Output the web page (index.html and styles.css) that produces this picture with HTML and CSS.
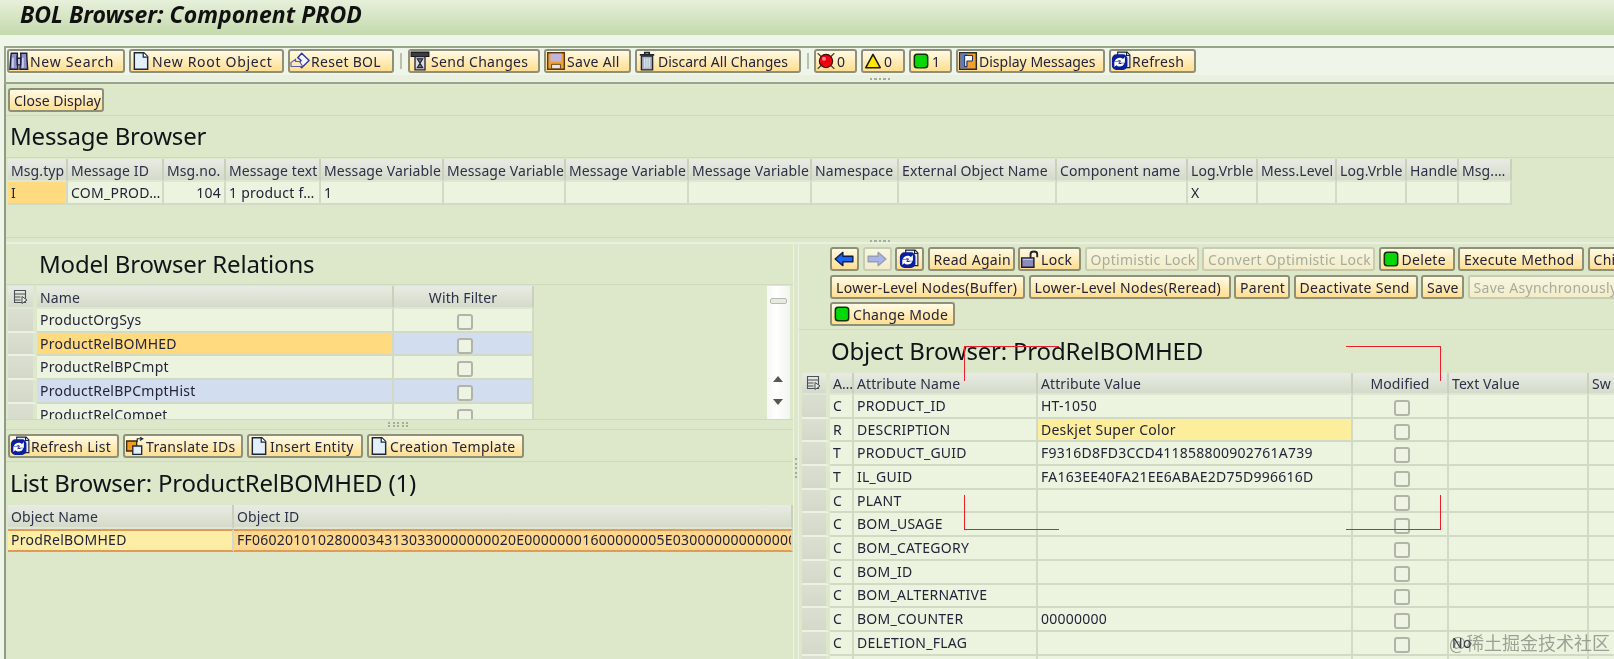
FILE: index.html
```html
<!DOCTYPE html>
<html lang="en">
<head>
<meta charset="utf-8">
<title>BOL Browser: Component PROD</title>
<link rel="stylesheet" href="styles.css">
</head>
<body>
<svg class="sprite" aria-hidden="true">
  <symbol id="i-bino" viewBox="0 0 18 18"><path d="M2 2h5.500v3h-.3l.8 11.500H.8l.9-11.500z" fill="#8f90c6" stroke="#1c2040" stroke-width="1.300"/><path d="M10.500 2H16v3l.8 11.500H9.800l.9-11.500z" fill="#8f90c6" stroke="#1c2040" stroke-width="1.300"/><path d="M7.500 6.500h3v6h-3z" fill="#c9c9e6" stroke="#1c2040" stroke-width="1.300"/><path d="M3.500 6v9M12.500 6v9" stroke="#dcdcf4" stroke-width="1.300"/></symbol>
  <symbol id="i-doc" viewBox="0 0 18 18"><path d="M3 1.500h8.500L15 5v11.500H3z" fill="#e3effa" stroke="#1c2838" stroke-width="1.300"/><path d="M11 1.500V5.500h4" fill="#fff" stroke="#1c2838" stroke-width="1.100"/></symbol>
  <symbol id="i-reset" viewBox="0 0 18 18"><path d="M10.500 2 17.200 8.500 10.500 15 7 11.500 10 8.500 7 6z" fill="#f7f7ff" stroke="#2b3aa8" stroke-width="1.300" stroke-linejoin="round"/><path d="M.8 10.500 5 7.500v2h3.500l3 4.500H1z" fill="#fbe7c2" stroke="#5a5aa0" stroke-width="1"/></symbol>
  <symbol id="i-send" viewBox="0 0 18 18"><path d="M1 1h16v4H1z" fill="#3c3c44" stroke="#15151c"/><path d="M4.500 5h9v12h-9z" fill="#d9dce6" stroke="#23232e" stroke-width="1.200"/><path d="M6.500 7h5L9 11l2.500 4h-5L9 11z" fill="#6b6f7e" stroke="#23232e"/></symbol>
  <symbol id="i-save" viewBox="0 0 18 18"><path d="M1.500 1.500h15v15h-15z" fill="#f0a030" stroke="#5a3a10" stroke-width="1.300"/><path d="M4 2.500h10v7H4z" fill="#c3b4dc"/><path d="M5 12h8v4H5z" fill="#e6e6e6" stroke="#5a3a10" stroke-width=".8"/></symbol>
  <symbol id="i-trash" viewBox="0 0 18 18"><path d="M2.500 3.500h13M7 3.500V1.500h4v2" fill="none" stroke="#23262e" stroke-width="1.500"/><path d="M4 4.500h10v12.500H4z" fill="#a9b4c6" stroke="#23262e" stroke-width="1.300"/><path d="M7 6.500v8.500M9 6.500v8.500M11 6.500v8.500" stroke="#e8edf4" stroke-width="1"/></symbol>
  <symbol id="i-red" viewBox="0 0 18 18"><path d="M1.500 2 16.500 16M16.500 2 1.500 16" stroke="#3a3f30" stroke-width="1"/><circle cx="9" cy="9" r="6" fill="#ee0010" stroke="#3a1010" stroke-width="1"/><circle cx="7.200" cy="7" r="1.800" fill="#ff8f8f"/></symbol>
  <symbol id="i-yellow" viewBox="0 0 18 18"><path d="M9 3 15.500 15h-13z" fill="#ffe800" stroke="#1c1c14" stroke-width="1.400" stroke-linejoin="round"/></symbol>
  <symbol id="i-green" viewBox="0 0 18 18"><rect x="3" y="3" width="12" height="12" rx="2.500" fill="#06d808" stroke="#10300f" stroke-width="1.400"/></symbol>
  <symbol id="i-msg" viewBox="0 0 18 18"><path d="M1.500 1.500h15v15h-15z" fill="#f0a030" stroke="#2a2a2a" stroke-width="1.300"/><path d="M2.200 2.200h6.300v13.600H2.200z" fill="#5d7cbc"/><path d="M6 4h7v5H8v5H6z" fill="#fff" stroke="#1a2a50" stroke-width=".9"/></symbol>
  <symbol id="i-refresh" viewBox="0 0 18 18"><path d="M6 1h8.500L17 3.500V15H6z" fill="#e8eef8" stroke="#15203a" stroke-width="1"/><path d="M14 1v3h3" fill="none" stroke="#15203a"/><rect x=".8" y="3" width="14" height="14" rx="4" fill="#0a1e9e"/><path d="M3.500 9c.6-2.800 5-4 7.300-1.800L12.500 5.500V10.500H7.500l1.600-1.600C8 8 6.500 8 5.800 9zM12 11c-.6 2.800-5 4-7.300 1.800L3 14.500V9.500H8l-1.600 1.600c1.100.9 2.600.9 3.300-.1z" fill="#fff"/></symbol>
  <symbol id="i-lock" viewBox="0 0 18 18"><path d="M9.500 8V4.500C9.500 1.500 15.500 1.500 15.500 4.500V7.500" fill="none" stroke="#23232e" stroke-width="1.700"/><path d="M1.500 8h11v8.500h-11z" fill="#8b8cbc" stroke="#1c1c30" stroke-width="1.300"/><path d="M2.500 9.500h9" stroke="#c8c8e4"/></symbol>
  <symbol id="i-trans" viewBox="0 0 18 18"><path d="M1.500 4.500h9v9h-9z" fill="#f09a20" stroke="#3a2a10" stroke-width="1.200"/><path d="M7 9h8v7.500H7z" fill="#e3effa" stroke="#1c2838" stroke-width="1.200"/><path d="M11 5.500V2.500h4.500M13.500 1l2.500 1.500-2.500 1.500" fill="none" stroke="#1c2838"/></symbol>
  <symbol id="i-back" viewBox="0 0 18 18"><path d="M1 9 8 3v3.500h9v5H8V15z" fill="#1a66f0" stroke="#0b1a50" stroke-width="1.200" stroke-linejoin="round"/></symbol>
  <symbol id="i-fwd" viewBox="0 0 18 18"><path d="M17 9 10 3v3.500H1v5h9V15z" fill="#a7b6ea" stroke="#9a9cb2" stroke-width="1.200" stroke-linejoin="round"/></symbol>
  <symbol id="i-layout" viewBox="0 0 16 16"><path d="M1.500 1.500h11v12h-11zM1.500 5h11M1.500 8h6M1.500 11h6" fill="none" stroke="#4c5058" stroke-width="1.100"/><path d="M9 7.500l5 3.500-5 3.500z" fill="#e9efe0" stroke="#4c5058"/></symbol>
</svg>

<header class="title">BOL Browser: Component PROD</header>

<div class="app-toolbar">
  <div class="bar">
    <button class="btn w118 wide"><svg class="ic"><use href="#i-bino"/></svg>New Search</button>
    <button class="btn w155 wide"><svg class="ic"><use href="#i-doc"/></svg>New Root Object</button>
    <button class="btn w106"><svg class="ic"><use href="#i-reset"/></svg>Reset BOL</button>
    <span class="sep"></span>
    <button class="btn w132"><svg class="ic"><use href="#i-send"/></svg>Send Changes</button>
    <button class="btn w87"><svg class="ic"><use href="#i-save"/></svg>Save All</button>
    <button class="btn w166 tight"><svg class="ic"><use href="#i-trash"/></svg>Discard All Changes</button>
    <span class="sep sep-narrow"></span>
    <button class="btn w43"><svg class="ic"><use href="#i-red"/></svg>0</button>
    <button class="btn w44"><svg class="ic"><use href="#i-yellow"/></svg>0</button>
    <button class="btn w43"><svg class="ic"><use href="#i-green"/></svg>1</button>
    <button class="btn w149 tight"><svg class="ic"><use href="#i-msg"/></svg>Display Messages</button>
    <button class="btn w87"><svg class="ic"><use href="#i-refresh"/></svg>Refresh</button>
  </div>
  <div class="top-grip"><span class="dots"></span></div>
</div>

<main class="main">
  <section class="msg">
    <div class="msg-tools"><button class="btn w96 plain tight">Close Display</button></div>
    <h2 class="head msg-head">Message Browser</h2>
    <div class="grid grid-msg">
      <div class="c h">Msg.typ</div><div class="c h">Message ID</div><div class="c h">Msg.no.</div><div class="c h">Message text</div><div class="c h">Message Variable</div><div class="c h">Message Variable</div><div class="c h">Message Variable</div><div class="c h">Message Variable</div><div class="c h">Namespace</div><div class="c h">External Object Name</div><div class="c h">Component name</div><div class="c h">Log.Vrble</div><div class="c h">Mess.Level</div><div class="c h">Log.Vrble</div><div class="c h">Handle</div><div class="c h">Msg.…</div>
      <div class="c cur">I</div><div class="c">COM_PROD…</div><div class="c num">104</div><div class="c">1 product f…</div><div class="c">1</div><div class="c"></div><div class="c"></div><div class="c"></div><div class="c"></div><div class="c"></div><div class="c"></div><div class="c">X</div><div class="c"></div><div class="c"></div><div class="c"></div><div class="c"></div>
    </div>
  </section>

  <div class="mid-grip"><span class="dots"></span></div>

  <div class="split">
    <section class="left">
      <h2 class="head rel-head">Model Browser Relations</h2>
      <div class="rel-wrap">
        <div class="grid grid-rel">
          <div class="c h lay"><svg class="ic-lay"><use href="#i-layout"/></svg></div><div class="c h">Name</div><div class="c h ctr">With Filter</div>
          <div class="c sel"></div><div class="c">ProductOrgSys</div><div class="c ctr"><i class="cb"></i></div>
          <div class="c sel"></div><div class="c cur">ProductRelBOMHED</div><div class="c ctr alt"><i class="cb"></i></div>
          <div class="c sel"></div><div class="c">ProductRelBPCmpt</div><div class="c ctr"><i class="cb"></i></div>
          <div class="c sel"></div><div class="c alt">ProductRelBPCmptHist</div><div class="c ctr alt"><i class="cb"></i></div>
          <div class="c sel"></div><div class="c">ProductRelCompet</div><div class="c ctr"><i class="cb"></i></div>
        </div>
        <div class="scroll">
          <span class="thumb"></span>
          <span class="arrow up"></span>
          <span class="arrow down"></span>
        </div>
      </div>
      <div class="list-grip"><span class="dots"></span><span class="dots"></span></div>
      <div class="list-tools">
        <button class="btn w111"><svg class="ic"><use href="#i-refresh"/></svg>Refresh List</button>
        <button class="btn w120"><svg class="ic"><use href="#i-trans"/></svg>Translate IDs</button>
        <button class="btn w116"><svg class="ic"><use href="#i-doc"/></svg>Insert Entity</button>
        <button class="btn w157"><svg class="ic"><use href="#i-doc"/></svg>Creation Template</button>
      </div>
      <h2 class="head list-head">List Browser: ProductRelBOMHED (1)</h2>
      <div class="grid grid-list">
        <div class="c h">Object Name</div><div class="c h">Object ID</div>
        <div class="c lead">ProdRelBOMHED</div><div class="c lead key">FF06020101028000343130330000000020E00000001600000005E0300000000000000</div>
      </div>
    </section>

    <div class="gutter"><span class="vdots"></span></div>

    <section class="obj-pane">
      <div class="obj-tools">
        <div class="tool-row">
          <button class="btn w29 only"><svg class="ic"><use href="#i-back"/></svg></button>
          <button class="btn w29 only off"><svg class="ic"><use href="#i-fwd"/></svg></button>
          <button class="btn w29 only"><svg class="ic"><use href="#i-refresh"/></svg></button>
          <button class="btn w87 plain">Read Again</button>
          <button class="btn w63"><svg class="ic"><use href="#i-lock"/></svg>Lock</button>
          <button class="btn w114 plain off">Optimistic Lock</button>
          <button class="btn w173 plain off">Convert Optimistic Lock</button>
          <button class="btn w76"><svg class="ic"><use href="#i-green"/></svg>Delete</button>
          <button class="btn w126 plain">Execute Method</button>
          <button class="btn w60 plain">Child</button>
        </div>
        <div class="tool-row">
          <button class="btn w195 plain">Lower-Level Nodes(Buffer)</button>
          <button class="btn w202 plain">Lower-Level Nodes(Reread)</button>
          <button class="btn w56 plain">Parent</button>
          <button class="btn w124 plain">Deactivate Send</button>
          <button class="btn w43 plain">Save</button>
          <button class="btn w170 plain off">Save Asynchronously</button>
        </div>
        <div class="tool-row">
          <button class="btn w125"><svg class="ic"><use href="#i-green"/></svg>Change Mode</button>
        </div>
      </div>
      <h2 class="head obj-head">Object Browser: ProdRelBOMHED</h2>
      <div class="grid grid-obj">
        <div class="c h lay"><svg class="ic-lay"><use href="#i-layout"/></svg></div><div class="c h">A…</div><div class="c h">Attribute Name</div><div class="c h">Attribute Value</div><div class="c h ctr">Modified</div><div class="c h">Text Value</div><div class="c h">Sw</div>
        <div class="c sel"></div><div class="c">C</div><div class="c">PRODUCT_ID</div><div class="c">HT-1050</div><div class="c ctr"><i class="cb"></i></div><div class="c"></div><div class="c"></div>
        <div class="c sel"></div><div class="c">R</div><div class="c">DESCRIPTION</div><div class="c input">Deskjet Super Color</div><div class="c ctr"><i class="cb"></i></div><div class="c"></div><div class="c"></div>
        <div class="c sel"></div><div class="c">T</div><div class="c">PRODUCT_GUID</div><div class="c">F9316D8FD3CCD411858800902761A739</div><div class="c ctr"><i class="cb"></i></div><div class="c"></div><div class="c"></div>
        <div class="c sel"></div><div class="c">T</div><div class="c">IL_GUID</div><div class="c">FA163EE40FA21EE6ABAE2D75D996616D</div><div class="c ctr"><i class="cb"></i></div><div class="c"></div><div class="c"></div>
        <div class="c sel"></div><div class="c">C</div><div class="c">PLANT</div><div class="c"></div><div class="c ctr"><i class="cb"></i></div><div class="c"></div><div class="c"></div>
        <div class="c sel"></div><div class="c">C</div><div class="c">BOM_USAGE</div><div class="c"></div><div class="c ctr"><i class="cb"></i></div><div class="c"></div><div class="c"></div>
        <div class="c sel"></div><div class="c">C</div><div class="c">BOM_CATEGORY</div><div class="c"></div><div class="c ctr"><i class="cb"></i></div><div class="c"></div><div class="c"></div>
        <div class="c sel"></div><div class="c">C</div><div class="c">BOM_ID</div><div class="c"></div><div class="c ctr"><i class="cb"></i></div><div class="c"></div><div class="c"></div>
        <div class="c sel"></div><div class="c">C</div><div class="c">BOM_ALTERNATIVE</div><div class="c"></div><div class="c ctr"><i class="cb"></i></div><div class="c"></div><div class="c"></div>
        <div class="c sel"></div><div class="c">C</div><div class="c">BOM_COUNTER</div><div class="c">00000000</div><div class="c ctr"><i class="cb"></i></div><div class="c"></div><div class="c"></div>
        <div class="c sel"></div><div class="c">C</div><div class="c">DELETION_FLAG</div><div class="c"></div><div class="c ctr"><i class="cb"></i></div><div class="c">No</div><div class="c"></div>
        <div class="c sel"></div><div class="c"></div><div class="c"></div><div class="c"></div><div class="c ctr"><i class="cb"></i></div><div class="c"></div><div class="c"></div>
      </div>
    </section>
  </div>
</main>

<span class="mark mark-tl"></span>
<span class="mark mark-tr"></span>
<span class="mark mark-bl"></span>
<span class="mark mark-br"></span>
<span class="watermark">@稀土掘金技术社区</span>
</body>
</html>
```
FILE: styles.css
```css
* { box-sizing: border-box; }
html, body { margin: 0; height: 100%; }
body {
  width: 1614px; height: 659px; overflow: hidden; position: relative;
  background: #f0f5ea; color: #23233a;
  font: 14px/1 "Noto Sans", "Liberation Sans", sans-serif;
  filter: blur(.3px);
}
.sprite { position: absolute; width: 0; height: 0; }

.title {
  height: 35px; padding: 1px 0 0 20px;
  background: linear-gradient(#e7f0da, #c4d9ad);
  font: italic 700 23px/26px "Noto Sans", sans-serif; color: #111;
}

.app-toolbar {
  margin: 11px 0 0 4px; height: 38px;
  border: 2px solid #97a58b; border-width: 2px 0 2px 2px;
}
.bar { display: flex; gap: 4px; height: 27px; padding: 1px 0 0 1px; }
.sep { width: 6px; display: flex; justify-content: center; }
.sep-narrow { width: 5px; }
.sep::before { content: ""; width: 2px; height: 16px; margin-top: 4px; background: #b8c0ae; }
.top-grip { height: 7px; background: #e9f0e0; padding: 3px 0 0 864px; }
.dots {
  display: block; width: 22px; height: 2px;
  background: repeating-linear-gradient(90deg, #a5ad9b 0 2px, transparent 2px 4.500px);
}

.btn {
  display: flex; align-items: center; flex: none; height: 24px; padding: 2px 0 0 0; margin: 0;
  border: 2px solid #8f9078; border-radius: 3px;
  background: linear-gradient(#fffbe6, #ffe9b0 60%, #ffdf92);
  font: 14px/1 "Noto Sans", "Liberation Sans", sans-serif; letter-spacing: .3px;
  color: #23233a; white-space: nowrap; overflow: hidden; text-align: left;
}
.btn.plain { padding-left: 4px; }
.btn.only { padding-left: 2px; }
.btn.off { border-color: #c8cdb2; background: linear-gradient(#f6f6e2, #f2ecc8); color: #a8ac9c; }
.btn.wide { letter-spacing: .7px; }
.btn.tight { letter-spacing: 0; }
.ic { width: 20px; height: 20px; flex: none; margin: -2px 1px 0 0; }
.w29 { width: 29px; } .w43 { width: 43px; }
.w44 { width: 44px; } .w56 { width: 56px; } .w60 { width: 60px; } .w63 { width: 63px; }
.w76 { width: 76px; } .w87 { width: 87px; } .w96 { width: 96px; } .w106 { width: 106px; }
.w111 { width: 111px; } .w114 { width: 114px; } .w116 { width: 116px; } .w118 { width: 118px; }
.w120 { width: 120px; } .w124 { width: 124px; } .w125 { width: 125px; } .w126 { width: 126px; }
.w132 { width: 132px; } .w149 { width: 149px; } .w155 { width: 155px; } .w157 { width: 157px; }
.w166 { width: 166px; } .w170 { width: 170px; } .w173 { width: 173px; } .w195 { width: 195px; }
.w202 { width: 202px; }

.main {
  margin-left: 4px; height: 575px; background: #dde8cb;
  border-left: 2px solid #8e9c83;
}
.head { margin: 0; font: 400 24px/32px "Noto Sans", sans-serif; color: #0f1418; letter-spacing: -.2px; }

.msg { height: 153px; }
.msg-tools { height: 32px; padding: 4px 0 0 2px; border-bottom: 1px solid #ced9bd; }
.msg-head { height: 42px; padding: 4px 0 0 4px; border-bottom: 1px solid #ced9bd; }

.grid { display: grid; margin-top: 1px; overflow: hidden; }
.grid-msg {
  margin-left: 2px; width: 1504px;
  grid-template-columns: 60px 96px 62px 95px 123px 122px 123px 123px 87px 158px 131px 70px 79px 70px 52px 53px;
  grid-template-rows: 23px 23px;
}
.grid-rel {
  width: 526px; flex: none; margin-top: 0;
  grid-template-columns: 29px 357px 140px;
  grid-template-rows: 23px; grid-auto-rows: 23.700px;
}
.grid-list {
  margin-left: 2px; width: 785px;
  grid-template-columns: 226px 1fr;
  grid-template-rows: 24px 23px;
}
.grid-obj {
  margin-left: 3px; margin-top: 0;
  grid-template-columns: 28px 24px 184px 315px 96px 140px 28px;
  grid-template-rows: 22px; grid-auto-rows: 23.700px;
}
.c {
  display: flex; align-items: center; min-width: 0; padding: 0 0 0 3px;
  background: #ecf4e0; white-space: nowrap; overflow: hidden;
  border-right: 2px solid #d1dac5; border-bottom: 2px solid #d1dac5;
  letter-spacing: .25px;
}
.h {
  padding-top: 2px; background: linear-gradient(#e8ebe3, #d4dbca); letter-spacing: .1px;
  color: #2c3048; border-right-color: #c9d1bd; border-bottom-color: #dfe7d2;
}
.num { justify-content: flex-end; padding-right: 3px; }
.ctr { justify-content: center; padding: 0; }
.h.ctr { padding-top: 2px; }
.sel { padding: 0; background: linear-gradient(#dbdfd2, #d3d9c9); border-right: 4px solid #dde8cb; border-bottom-color: #ecf2e2; }
.lay { justify-content: center; padding: 0; border-right: 4px solid #dde8cb; }
.ic-lay { width: 16px; height: 16px; }
.alt { background: #d2deef; }
.cur { background: #ffda7f; }
.input { background: #fdee9d; }
.lead { background: #fdeeA6; border-top: 2px solid #e39a55; border-bottom: 2px solid #e39a55; padding-bottom: 1px; }
.key { background: #fed88c; }
.cb {
  display: block; width: 16px; height: 16px; margin: 4px 0 0 3px;
  border: 2px solid #b0b5a8; border-radius: 3px; background: #eef4e4;
}

.mid-grip {
  height: 7px; border-top: 1px solid #ced9bd; border-bottom: 2px solid #e9f0df;
  padding: 2px 0 0 864px;
}

.split { display: flex; height: 415px; }
.left { width: 787px; flex: none; }
.rel-head { height: 41px; padding: 4px 0 0 33px; border-bottom: 1px solid #ced9bd; }
.rel-wrap { display: flex; height: 134px; padding: 1px 0 0 2px; overflow: hidden; }
.scroll {
  position: relative; width: 23px; margin-left: auto; margin-right: 3px;
  background: linear-gradient(90deg, #f6f8f2, #ffffff 40%, #f2f5ee);
}
.thumb {
  position: absolute; left: 3px; top: 12px; width: 17px; height: 6px;
  background: #e6ebdd; border: 1px solid #b6bcad; border-radius: 2px;
}
.arrow { position: absolute; left: 6px; width: 0; height: 0; border: 5px solid transparent; }
.up { top: 90px; border-bottom: 6px solid #555a50; border-top: 0; }
.down { top: 113px; border-top: 6px solid #555a50; border-bottom: 0; }

.list-grip {
  height: 11px; border-top: 1px solid #ced9bd; border-bottom: 1px solid #ced9bd;
  padding: 2px 0 0 382px;
}
.list-grip .dots { margin-bottom: 1px; }
.list-tools { display: flex; gap: 4px; height: 32px; padding: 4px 0 0 2px; border-bottom: 1px solid #ced9bd; }
.list-head { height: 42px; padding: 5px 0 0 4px; }

.gutter {
  width: 6px; flex: none; padding-top: 214px;
  border-left: 1px solid #ecf2e2; border-right: 1px solid #ecf2e2; background: #dde8cb;
}
.vdots {
  display: block; width: 2px; height: 22px; margin-left: 1px;
  background: repeating-linear-gradient(#a5ad9b 0 2px, transparent 2px 4.500px);
}

.obj-pane { flex: 1; min-width: 0; overflow: hidden; }
.obj-tools { height: 86px; padding: 3px 0 0 31px; border-bottom: 1px solid #ced9bd; display: flex; flex-direction: column; gap: 3.500px; }
.tool-row { display: flex; gap: 3.500px; height: 24px; }
.obj-head { height: 43px; padding: 5px 0 0 32px; }

.mark { position: absolute; width: 95px; height: 35px; border: 0 solid #e8202c; }
.mark-tl { left: 964px; top: 346px; border-width: 1.500px 0 0 1.500px; }
.mark-tr { left: 1346px; top: 346px; border-width: 1.500px 1.500px 0 0; }
.mark-bl { left: 964px; top: 495px; border-width: 0 0 1.500px 1.500px; }
.mark-br { left: 1346px; top: 495px; border-width: 0 1.500px 1.500px 0; }

.watermark {
  position: absolute; left: 1449px; top: 632px;
  font: 18px/20px "Noto Sans CJK SC", sans-serif; color: rgba(90, 95, 85, .55); white-space: nowrap;
}
```
